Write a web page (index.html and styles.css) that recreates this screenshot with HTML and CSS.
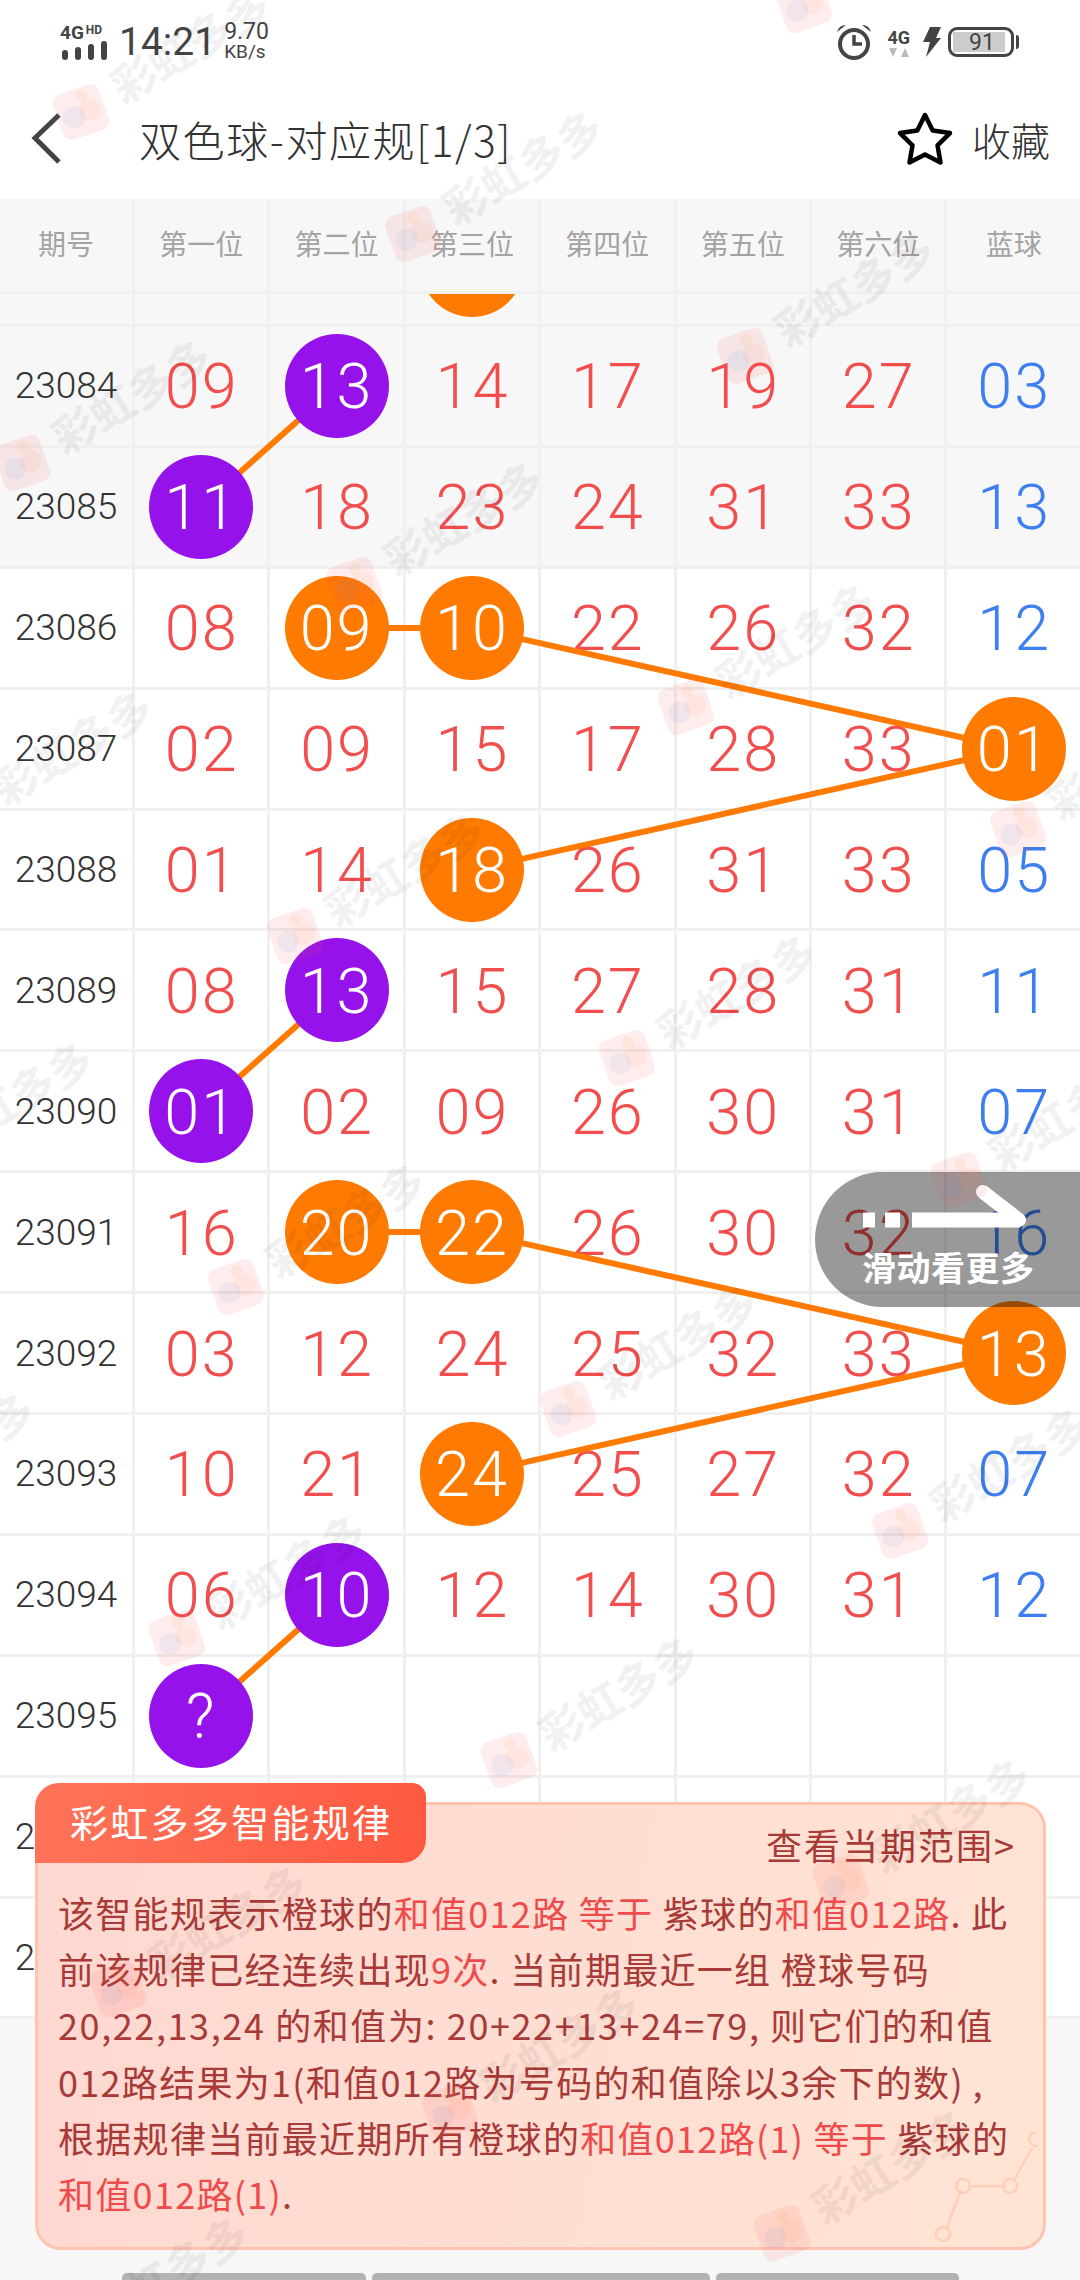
FILE: index.html
```html
<!DOCTYPE html>
<html lang="zh-CN">

<head>
    <meta charset="UTF-8">
    <title>双色球-对应规</title>
    <link rel="stylesheet" href="styles.css">
</head>

<body>
    <div class="page">
        <header class="status">
            <div class="net">
                <div class="net-top"><span class="g4">4G</span><span class="hd">HD</span></div>
                <div class="bars"><i class="b1"></i><i class="b2"></i><i class="b3"></i><i class="b4"></i></div>
            </div>
            <span class="time">14:21</span>
            <div class="speed"><span>9.70</span><span class="unit">KB/s</span></div>
            <div class="status-right">
                <svg class="alarm" width="36" height="36" viewBox="0 0 36 36">
                    <circle cx="18" cy="20" r="14" fill="none" stroke="#444" stroke-width="4" />
                    <path d="M18 11v9h8" fill="none" stroke="#444" stroke-width="3.5" />
                    <path d="M1 8Q3 1 10 1ZM35 8Q33 1 26 1Z" fill="#444" />
                </svg>
                <div class="sim"><span>4G</span>
                    <svg width="20" height="9" viewBox="0 0 20 9">
                        <path d="M0 0h8l-4 9zM12 9h8l-4-9z" fill="#bbb" />
                    </svg>
                </div>
                <svg class="bolt" width="18" height="30" viewBox="0 0 18 30">
                    <path d="M7 0h11l-5 11h5L3 30l4-15H0z" fill="#444" />
                </svg>
                <div class="battery"><div class="level">91</div></div>
            </div>
        </header>

        <nav class="title-bar">
            <svg class="back" width="34" height="54" viewBox="0 0 34 54">
                <path d="M29 3L5 26l24 24" fill="none" stroke="#444" stroke-width="5" />
            </svg>
            <h1>双色球-对应规[1/3]</h1>
            <svg class="star" width="58" height="56" viewBox="0 0 58 56">
                <path d="M29 4l7.700 15.600 17.300 2.500-12.500 12.200 3 17.200L29 43.400 13.500 51.500l3-17.200L4 22.100l17.300-2.500z" fill="none" stroke="#000" stroke-width="4.500" stroke-linejoin="round" />
            </svg>
            <span class="fav">收藏</span>
        </nav>

        <div class="row head">
            <div>期号</div><div>第一位</div><div>第二位</div><div>第三位</div><div>第四位</div><div>第五位</div><div>第六位</div><div>蓝球</div>
        </div>

        <section class="list">
            <div class="row shade first"><div></div><div></div><div></div><div><b class="ball orange"></b></div><div></div><div></div><div></div><div></div></div>
            <div class="row shade"><div class="no">23084</div><div>09</div><div><b class="ball purple">13</b></div><div>14</div><div>17</div><div>19</div><div>27</div><div class="blue">03</div></div>
            <div class="row shade"><div class="no">23085</div><div><b class="ball purple">11</b></div><div>18</div><div>23</div><div>24</div><div>31</div><div>33</div><div class="blue">13</div></div>
            <div class="row"><div class="no">23086</div><div>08</div><div><b class="ball orange">09</b></div><div><b class="ball orange">10</b></div><div>22</div><div>26</div><div>32</div><div class="blue">12</div></div>
            <div class="row"><div class="no">23087</div><div>02</div><div>09</div><div>15</div><div>17</div><div>28</div><div>33</div><div><b class="ball orange">01</b></div></div>
            <div class="row"><div class="no">23088</div><div>01</div><div>14</div><div><b class="ball orange">18</b></div><div>26</div><div>31</div><div>33</div><div class="blue">05</div></div>
            <div class="row"><div class="no">23089</div><div>08</div><div><b class="ball purple">13</b></div><div>15</div><div>27</div><div>28</div><div>31</div><div class="blue">11</div></div>
            <div class="row"><div class="no">23090</div><div><b class="ball purple">01</b></div><div>02</div><div>09</div><div>26</div><div>30</div><div>31</div><div class="blue">07</div></div>
            <div class="row"><div class="no">23091</div><div>16</div><div><b class="ball orange">20</b></div><div><b class="ball orange">22</b></div><div>26</div><div>30</div><div>32</div><div class="blue">16</div></div>
            <div class="row"><div class="no">23092</div><div>03</div><div>12</div><div>24</div><div>25</div><div>32</div><div>33</div><div><b class="ball orange">13</b></div></div>
            <div class="row"><div class="no">23093</div><div>10</div><div>21</div><div><b class="ball orange">24</b></div><div>25</div><div>27</div><div>32</div><div class="blue">07</div></div>
            <div class="row"><div class="no">23094</div><div>06</div><div><b class="ball purple">10</b></div><div>12</div><div>14</div><div>30</div><div>31</div><div class="blue">12</div></div>
            <div class="row"><div class="no">23095</div><div><b class="ball purple">?</b></div><div></div><div></div><div></div><div></div><div></div><div></div></div>
            <div class="row"><div class="no">23096</div><div></div><div></div><div></div><div></div><div></div><div></div><div></div></div>
            <div class="row"><div class="no">23097</div><div></div><div></div><div></div><div></div><div></div><div></div><div></div></div>

            <!-- lijnerne mellem kuglerne, y = 92 + 120.9 * række -->
            <svg class="links" width="1080" height="1724" viewBox="0 0 1080 1724">
                <g fill="none" stroke="#ff7a00" stroke-width="6">
                    <path d="M337 92L201 213" />
                    <path d="M337 334H472L1014 455L472 576" />
                    <path d="M337 696L201 817" />
                    <path d="M337 938H472L1014 1059L472 1180" />
                    <path d="M337 1301L201 1422" />
                </g>
            </svg>
        </section>

        <footer class="foot">
            <span class="tab-a"></span><span class="tab-b"></span><span class="tab-c"></span>
        </footer>

        <aside class="hint">
            <svg class="hint-arrow" width="170" height="50" viewBox="0 0 170 50">
                <path d="M0 35h12M22 35h15M49 35h108" fill="none" stroke="#fff" stroke-width="15" />
                <path d="M120 7l36 28" fill="none" stroke="#fff" stroke-width="14" stroke-linecap="round" />
            </svg>
            <span>滑动看更多</span>
        </aside>

        <aside class="rule">
            <h2>彩虹多多智能规律</h2>
            <div class="rule-box">
                <svg class="rule-deco" width="110" height="110" viewBox="0 0 110 110">
                    <path d="M18 98L33 58M40 54H78M86 48L104 16" fill="none" stroke="#ffcfb8" stroke-width="2.500" />
                    <g fill="none" stroke="#ffcfb8" stroke-width="2.500">
                        <circle cx="15" cy="102" r="7" />
                        <circle cx="35" cy="54" r="7" />
                        <circle cx="82" cy="54" r="7" />
                        <circle cx="108" cy="7" r="7" />
                    </g>
                </svg>
                <a class="rule-link">查看当期范围&gt;</a>
                <p>该智能规表示橙球的<em>和值012路 等于</em> 紫球的<em>和值012路</em>. 此<br>
                    前该规律已经连续出现<em>9次</em>. 当前期最近一组 橙球号码<br>
                    <span class="sum">20,22,13,24 的和值为: 20+22+13+24=79,</span> 则它们的和值<br>
                    012路结果为1(和值012路为号码的和值除以3余下的数)&#8201;,<br>
                    根据规律当前最近期所有橙球的<em>和值012路(1) 等于</em> 紫球的<br>
                    <em>和值012路(1)</em>.</p>
            </div>
        </aside>

        <svg class="marks" width="1080" height="2280" viewBox="0 0 1080 2280">
            <defs>
                <g id="wm" transform="rotate(-31)">
                    <g transform="rotate(12)">
                        <rect x="-24" y="-24" width="48" height="48" rx="9" fill="#ff4d4d" opacity="0.1" />
                        <circle cx="-8" cy="3" r="11" fill="#3f8fe8" opacity="0.08" />
                        <circle cx="9" cy="1" r="11" fill="#ff7a50" opacity="0.08" />
                        <circle cx="6" cy="-15" r="6" fill="#ffa040" opacity="0.1" />
                    </g>
                    <text x="40" y="16" class="mark-text">彩虹多多</text>
                </g>
            </defs>
            <use href="#wm" x="81" y="112" /><use href="#wm" x="413" y="234" /><use href="#wm" x="745" y="356" /><use href="#wm" x="804" y="5" />
            <use href="#wm" x="22" y="463" /><use href="#wm" x="354" y="585" /><use href="#wm" x="686" y="707" /><use href="#wm" x="1018" y="829" />
            <use href="#wm" x="-37" y="814" /><use href="#wm" x="295" y="936" /><use href="#wm" x="627" y="1058" /><use href="#wm" x="959" y="1180" />
            <use href="#wm" x="-96" y="1165" /><use href="#wm" x="236" y="1287" /><use href="#wm" x="568" y="1409" /><use href="#wm" x="900" y="1531" />
            <use href="#wm" x="-155" y="1516" /><use href="#wm" x="177" y="1638" /><use href="#wm" x="509" y="1760" /><use href="#wm" x="841" y="1882" />
            <use href="#wm" x="118" y="1989" /><use href="#wm" x="450" y="2111" /><use href="#wm" x="782" y="2233" /><use href="#wm" x="59" y="2340" />
        </svg>
    </div>
</body>

</html>
```

FILE: styles.css
```css
body {
    margin: 0;
    background: white;
    font-family: "Noto Sans CJK SC", Roboto, sans-serif;
}

.page {
    position: relative;
    display: flex;
    flex-direction: column;
    width: 1080px;
    height: 2280px;
    overflow: hidden;
}

/* statuslinje */
.status {
    display: flex;
    align-items: center;
    height: 80px;
    padding: 4px 66px 0 60px;
    box-sizing: border-box;
    color: #444;
    font-family: Roboto, sans-serif;
}

.net {
    display: flex;
    flex-direction: column;
    width: 59px;
}

.net-top {
    display: flex;
    height: 15px;
    font-weight: 700;
    line-height: 15px;
}

.g4 {
    font-size: 19px;
}

.hd {
    margin-left: 2px;
    font-size: 12px;
    line-height: 11px;
}

.bars {
    display: flex;
    align-items: flex-end;
    gap: 7px;
    height: 20px;
    margin-left: 2px;
}

.bars i {
    width: 6px;
    border-radius: 3px;
    background: #444;
}

.b1 { height: 10px; }
.b2 { height: 13px; }
.b3 { height: 16px; }
.b4 { height: 19px; }

.time {
    font-size: 39px;
    font-weight: 400;
}

.speed {
    display: flex;
    flex-direction: column;
    margin-left: 8px;
    font-size: 23px;
    line-height: 20px;
}

.unit {
    font-size: 19px;
}

.status-right {
    display: flex;
    align-items: center;
    gap: 13px;
    margin-left: auto;
}

.alarm {
    margin-right: 2px;
}

.sim {
    display: flex;
    flex-direction: column;
    align-items: center;
    font-size: 18px;
    font-weight: 700;
    line-height: 20px;
}

.sim svg {
    display: block;
}

.bolt {
    margin-right: -6px;
}

.battery {
    position: relative;
    width: 66px;
    height: 30px;
    box-sizing: border-box;
    padding: 2px;
    border: 3px solid #444;
    border-radius: 9px;
}

.battery::after {
    content: "";
    position: absolute;
    top: 5px;
    right: -8px;
    width: 3px;
    height: 14px;
    border-radius: 0 3px 3px 0;
    background: #444;
}

.level {
    width: 52px;
    height: 100%;
    padding-left: 6px;
    box-sizing: border-box;
    background: #ccc;
    font-size: 23px;
    line-height: 21px;
    text-align: center;
}

/* titel */
.title-bar {
    display: flex;
    align-items: center;
    height: 119px;
    padding: 0 30px 2px;
    box-sizing: border-box;
    color: #333;
}

.back {
    margin-right: 75px;
}

h1 {
    margin: 0;
    font-size: 42px;
    font-weight: 300;
    letter-spacing: 1.600px;
}

.star {
    margin-left: auto;
    margin-right: 18px;
}

.fav {
    font-size: 39px;
    font-weight: 300;
}

/* tabel */
.row {
    display: grid;
    grid-template-columns: 135px repeat(6, 135.4px) 1fr;
    height: 120.9px;
    box-sizing: border-box;
    border-bottom: 3px solid #f0f0f0;
}

.row > div {
    display: flex;
    justify-content: center;
    align-items: center;
    padding: 2px 0 0 1px;
    border-right: 3px solid #f0f0f0;
    color: #f24e4e;
    font-family: Roboto, sans-serif;
    font-size: 63px;
    font-weight: 300;
    letter-spacing: 2px;
}

.row > div:last-child {
    border-right: 0;
}

.row > .no {
    padding: 0;
    color: #333;
    font-size: 37px;
    font-weight: 300;
    letter-spacing: 0;
}

.row > .blue {
    color: #3d7ff0;
}

.head {
    flex: none;
    height: 95px;
    background: #f7f7f7;
}

.row.head > div {
    padding: 0 0 4px;
    color: #a3a3a3;
    font-family: "Noto Sans CJK SC", sans-serif;
    font-size: 28px;
    font-weight: 400;
    letter-spacing: 0;
}

.list {
    position: relative;
    flex: none;
    height: 1724px;
    overflow: hidden;
}

.first {
    margin-top: -87.9px;
}

.shade {
    background: #f7f7f7;
}

.links {
    position: absolute;
    top: 0;
    left: 0;
    z-index: 1;
}

.ball {
    position: relative;
    z-index: 2;
    display: flex;
    justify-content: center;
    align-items: center;
    flex: none;
    width: 104px;
    height: 104px;
    margin: -2px 0 0 -1px;
    padding-top: 2px;
    box-sizing: border-box;
    border-radius: 50%;
    color: white;
    font-weight: 300;
}

.purple {
    background: #9612ea;
}

.orange {
    background: #ff7a00;
}

.foot {
    flex: 1;
    display: flex;
    justify-content: center;
    align-items: flex-end;
    gap: 6px;
    background: #f7f7f7;
}

.foot span {
    height: 7px;
    border-radius: 5px 5px 0 0;
    background: #b3b3b3;
}

.tab-a { width: 244px; }
.tab-b { width: 338px; }
.tab-c { width: 243px; }

/* grå boble */
.hint {
    position: absolute;
    top: 1172px;
    right: 0;
    z-index: 3;
    width: 265px;
    height: 135px;
    border-radius: 68px 0 0 68px;
    background: rgba(0, 0, 0, 0.4);
    color: white;
    font-size: 34px;
    font-weight: 700;
    letter-spacing: 0.500px;
}

.hint-arrow {
    position: absolute;
    top: 13px;
    left: 48px;
}

.hint span {
    position: absolute;
    top: 70px;
    left: 47px;
    line-height: 50px;
}

/* kortet */
.rule {
    position: absolute;
    top: 1783px;
    left: 35px;
    z-index: 4;
    width: 1011px;
}

.rule h2 {
    position: relative;
    z-index: 1;
    width: 391px;
    height: 80px;
    margin: 0;
    padding-left: 35px;
    box-sizing: border-box;
    border-radius: 24px 14px 24px 0;
    background: linear-gradient(100deg, #ff7459, #ff5940);
    color: white;
    font-size: 38px;
    font-weight: 400;
    letter-spacing: 2.300px;
    line-height: 76px;
}

.rule-box {
    position: relative;
    height: 448px;
    margin-top: -61px;
    padding: 11px 27px 0 20px;
    box-sizing: border-box;
    border: 3px solid #ffc4b0;
    border-radius: 26px;
    background: linear-gradient(100deg, #ffd8d1, #ffe4d4);
    color: #a83a38;
    font-size: 36px;
}

.rule-deco {
    position: absolute;
    right: 5px;
    bottom: 5px;
}

.rule-link {
    position: relative;
    display: block;
    text-align: right;
    font-size: 36px;
    letter-spacing: 2px;
    line-height: 56px;
}

.rule-box p {
    position: relative;
    margin: 12px 0 0;
    letter-spacing: 1.300px;
    line-height: 56.200px;
    white-space: nowrap;
}

.rule-box .sum {
    letter-spacing: 1.600px;
}

.rule-box em {
    color: #ee4c4c;
    font-style: normal;
}

/* vandmærke */
.marks {
    position: absolute;
    top: 0;
    left: 0;
    z-index: 5;
    pointer-events: none;
}

.mark-text {
    fill: #000;
    opacity: 0.05;
    font-size: 44px;
    font-weight: 700;
}
```
